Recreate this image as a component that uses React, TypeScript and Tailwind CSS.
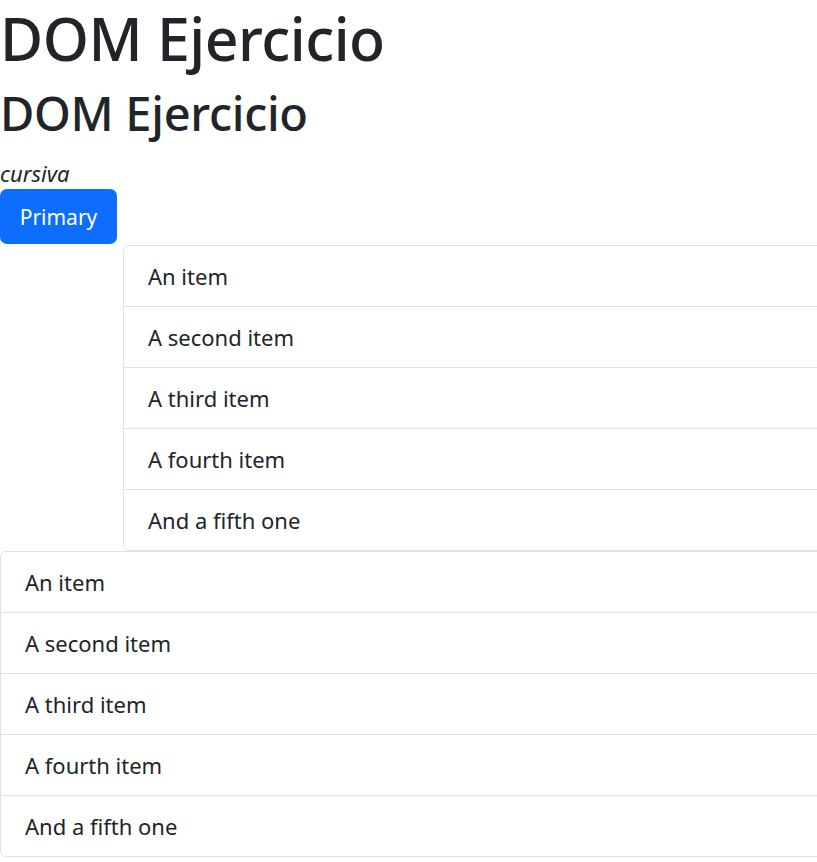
const items = ["An item", "A second item", "A third item", "A fourth item", "And a fifth one"];

function ListGroup({ className }: { className: string }) {
  return (
    <ul className={`w-[900px] rounded-[6px] border border-[#dee2e6] bg-white ${className}`}>
      {items.map((it, i) => (
        <li
          key={i}
          className={`flex items-center px-6 text-[22px] text-[#212529] ${i > 0 ? "h-[61px] border-t border-[#dee2e6]" : "h-[60px]"}`}
        >
          {it}
        </li>
      ))}
    </ul>
  );
}

export default function App() {
  return (
    <div className="w-[817px] overflow-hidden bg-white text-[#212529] font-['Noto_Sans',sans-serif]">
      <h1 className="text-[59px] font-medium leading-[76px] tracking-[-0.5px]">DOM Ejercicio</h1>
      <h2 className="text-[47px] font-medium leading-[74px] tracking-[-0.3px]">DOM Ejercicio</h2>
      <p className="h-[39px] text-[22px] italic leading-[46px]">cursiva</p>
      <button type="button" className="h-[55px] w-[117px] rounded-[7px] bg-[#0d6efd] pt-[3px] text-[21px] text-white">Primary</button>
      <ListGroup className="ml-[123px] mt-[1px]" />
      <ListGroup className="" />
    </div>
  );
}
